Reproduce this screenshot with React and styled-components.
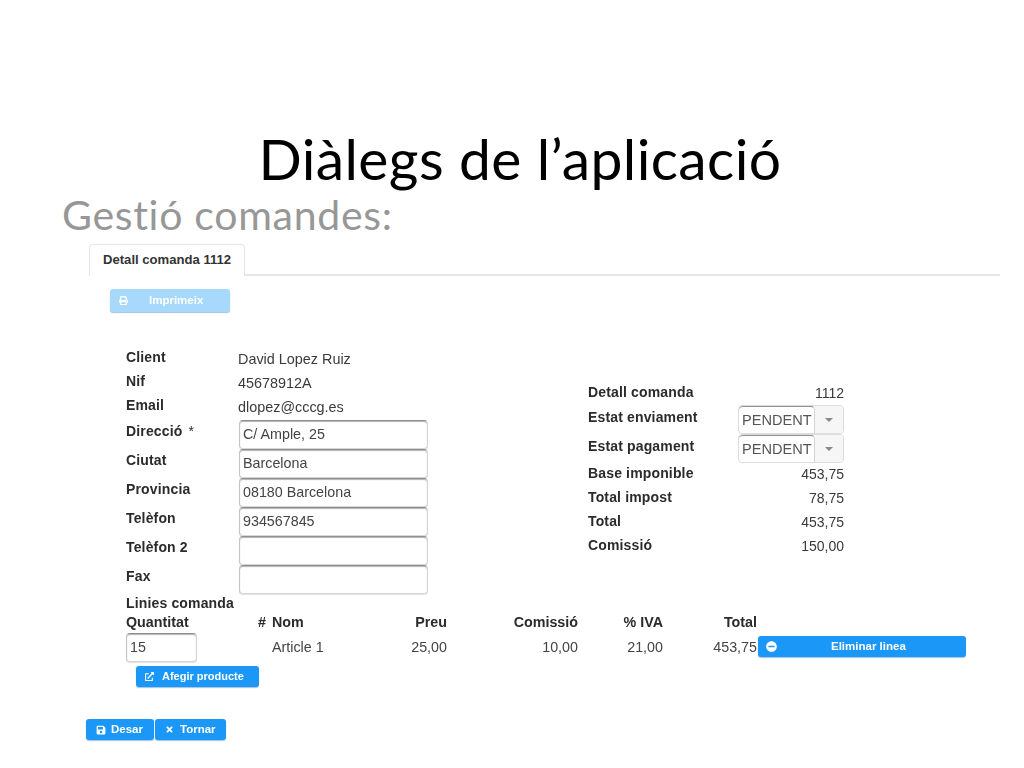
import React from "react";
import styled, { createGlobalStyle } from "styled-components";
import { FaPrint, FaExternalLinkAlt, FaSave, FaTimes, FaMinusCircle } from "react-icons/fa";

const Global = createGlobalStyle`
  html, body { margin: 0; padding: 0; background: #fff; }
  * { box-sizing: border-box; }
`;

const Slide = styled.div`
  width: 1024px;
  height: 768px;
  overflow: hidden;
  background: #fff;
  font-family: "Liberation Sans", Arial, sans-serif;
  font-size: 14px;
  color: #333;
`;
const Title = styled.h1`
  margin: 0;
  padding: 123px 0 0 16px;
  height: 193px;
  text-align: center;
  font: 400 57px/70px Lato, sans-serif;
  font-variant-ligatures: none;
  letter-spacing: 0.4px;
  color: #000;
`;
const Subtitle = styled.h2`
  margin: 0;
  padding-left: 62px;
  height: 51px;
  font: 400 41px/44px Lato, sans-serif;
  font-variant-ligatures: none;
  letter-spacing: 0.7px;
  color: #979797;
`;
const Form = styled.div`
  filter: blur(0.35px);
`;
const TabBar = styled.div`
  margin-left: 89px;
  width: 911px;
  height: 32px;
  display: flex;
  border-bottom: 2px solid #e6e6e6;
`;
const Tab = styled.div`
  width: 156px;
  height: 32px;
  padding-left: 13px;
  background: #fff;
  border: 1px solid #e6e6e6;
  border-bottom: none;
  border-radius: 4px 4px 0 0;
  font-weight: 700;
  font-size: 13.1px;
  line-height: 29px;
  color: #333;
`;
const Toolbar = styled.div`
  padding: 13px 0 0 110px;
  height: 70px;
`;
const Button = styled.div`
  display: flex;
  align-items: center;
  height: ${(p) => p.$h || 22}px;
  width: ${(p) => p.$w}px;
  padding-left: ${(p) => p.$pad || 9}px;
  gap: ${(p) => p.$gap || 6}px;
  background: ${(p) => (p.$faded ? "#a7d9fd" : "#1b98f7")};
  border-radius: 3px;
  box-shadow: 0 1px 1px rgba(0, 80, 160, 0.35);
  color: #fff;
  font-weight: 700;
  font-size: ${(p) => p.$fs || 11.5}px;
  line-height: 1;
  white-space: nowrap;
  svg { flex: none; }
`;
const Columns = styled.div`
  display: flex;
  padding-left: 126px;
  height: 248px;
`;
const LeftCol = styled.div`
  width: 462px;
`;
const RightCol = styled.div`
  width: 256px;
  padding-top: 35px;
`;
const InfoRow = styled.div`
  display: grid;
  grid-template-columns: 112px 1fr;
  height: 24px;
  &[data-gap] { margin-bottom: 2px; }
`;
const FieldRow = styled.div`
  display: grid;
  grid-template-columns: 113px 189px;
  height: 29px;
`;
const Label = styled.div`
  font-weight: 700;
  font-size: 14px;
  line-height: 22px;
  letter-spacing: 0.15px;
  padding-top: ${(p) => p.$top || 0}px;
  color: #2b2b2b;
  white-space: nowrap;
  span { font-weight: 400; margin-left: 6px; }
`;
const Value = styled.div`
  font-size: 14.4px;
  line-height: 26px;
  color: #3a3a3a;
`;
const TextInput = styled.input`
  display: block;
  width: ${(p) => p.$w || 189}px;
  height: 29px;
  padding: 0 3px 2px;
  border: 1px solid #d6d6d6;
  border-top-color: #8f8f8f;
  border-left-color: #c4c4c4;
  border-radius: 4px;
  box-shadow: inset 0 1px 1px rgba(0, 0, 0, 0.3), 0 1px 1px rgba(0, 0, 0, 0.12);
  background: #fff;
  font: 14.3px "Liberation Sans", Arial, sans-serif;
  color: #444;
  outline: none;
`;
const DetailRow = styled.div`
  display: grid;
  grid-template-columns: 150px 106px;
  height: ${(p) => p.$h || 24}px;
`;
const Amount = styled.div`
  text-align: right;
  font-size: 14px;
  line-height: 24px;
  color: #3a3a3a;
`;
const SelectBox = styled.div`
  display: flex;
  width: 106px;
  height: 29px;
  border: 1px solid #dcdcdc;
  border-radius: 4px;
  overflow: hidden;
`;
const SelectText = styled.div`
  width: 76px;
  padding-left: 3px;
  border-top: 1px solid #8e8e8e;
  border-right: 1px solid #d4d4d4;
  border-radius: 4px 4px 0 0;
  font-size: 14.6px;
  line-height: 26px;
  color: #555;
  white-space: nowrap;
`;
const SelectCaret = styled.div`
  flex: 1;
  display: flex;
  align-items: center;
  justify-content: center;
  background: #f6f6f6;
  &::after {
    content: "";
    border-left: 4px solid transparent;
    border-right: 4px solid transparent;
    border-top: 4px solid #888;
  }
`;
const Lines = styled.div`
  padding-left: 126px;
`;
const LinesTitle = styled.div`
  font-weight: 700;
  font-size: 14px;
  line-height: 18px;
  letter-spacing: 0.15px;
  color: #2b2b2b;
`;
const LineGrid = styled.div`
  display: grid;
  grid-template-columns: 130px 10px 124px 57px 131px 85px 94px 209px;
`;
const Head = styled.div`
  font-weight: 700;
  font-size: 14.3px;
  line-height: 20px;
  height: 21px;
  color: #2b2b2b;
  white-space: nowrap;
  text-align: ${(p) => (p.$right ? "right" : "left")};
  padding-left: ${(p) => p.$pad || 0}px;
`;
const Cell = styled.div`
  font-size: 14.3px;
  line-height: 29px;
  color: #444;
  text-align: ${(p) => (p.$right ? "right" : "left")};
  padding-left: ${(p) => p.$pad || 0}px;
`;
const ActionCell = styled.div`
  padding: 3px 0 0 1px;
`;
const AddRow = styled.div`
  padding: 4px 0 0 10px;
`;
const Footer = styled.div`
  display: flex;
  gap: 1px;
  padding: 32px 0 0 86px;
`;

const info = [
  ["Client", "David Lopez Ruiz"],
  ["Nif", "45678912A"],
  ["Email", "dlopez@cccg.es"],
];
const fields = [
  ["Direcció", "C/ Ample, 25", true],
  ["Ciutat", "Barcelona"],
  ["Provincia", "08180 Barcelona"],
  ["Telèfon", "934567845"],
  ["Telèfon 2", ""],
  ["Fax", ""],
];

export default function App() {
  return (
    <Slide>
      <Global />
      <Title>Diàlegs de l’aplicació</Title>
      <Subtitle>Gestió comandes:</Subtitle>
      <Form>
        <TabBar>
          <Tab>Detall comanda 1112</Tab>
        </TabBar>
        <Toolbar>
          <Button $w={120} $h={23} $faded $gap={21}>
            <FaPrint size={9} />
            Imprimeix
          </Button>
        </Toolbar>
        <Columns>
          <LeftCol>
            {info.map(([l, v], i) => (
              <InfoRow key={l} data-gap={i === 2 ? "" : undefined}>
                <Label>{l}</Label>
                <Value>{v}</Value>
              </InfoRow>
            ))}
            {fields.map(([l, v, req]) => (
              <FieldRow key={l}>
                <Label>
                  {l}
                  {req && <span>*</span>}
                </Label>
                <TextInput defaultValue={v} readOnly />
              </FieldRow>
            ))}
          </LeftCol>
          <RightCol>
            <DetailRow>
              <Label>Detall comanda</Label>
              <Amount>1112</Amount>
            </DetailRow>
            <DetailRow $h={29}>
              <Label $top={1}>Estat enviament</Label>
              <SelectBox>
                <SelectText>PENDENT</SelectText>
                <SelectCaret />
              </SelectBox>
            </DetailRow>
            <DetailRow $h={28}>
              <Label $top={1}>Estat pagament</Label>
              <SelectBox>
                <SelectText>PENDENT</SelectText>
                <SelectCaret />
              </SelectBox>
            </DetailRow>
            {[
              ["Base imponible", "453,75"],
              ["Total impost", "78,75"],
              ["Total", "453,75"],
              ["Comissió", "150,00"],
            ].map(([l, v]) => (
              <DetailRow key={l}>
                <Label>{l}</Label>
                <Amount>{v}</Amount>
              </DetailRow>
            ))}
          </RightCol>
        </Columns>
        <Lines>
          <LinesTitle>Linies comanda</LinesTitle>
          <LineGrid>
            <Head>Quantitat</Head>
            <Head $right>#</Head>
            <Head $pad={6}>Nom</Head>
            <Head $right>Preu</Head>
            <Head $right>Comissió</Head>
            <Head $right>% IVA</Head>
            <Head $right>Total</Head>
            <Head />
            <TextInput $w={71} defaultValue="15" readOnly />
            <Cell />
            <Cell $pad={6}>Article 1</Cell>
            <Cell $right>25,00</Cell>
            <Cell $right>10,00</Cell>
            <Cell $right>21,00</Cell>
            <Cell $right>453,75</Cell>
            <ActionCell>
              <Button $w={208} $h={21} $gap={54} $pad={8}>
                <FaMinusCircle size={11} />
                Eliminar linea
              </Button>
            </ActionCell>
          </LineGrid>
          <AddRow>
            <Button $w={123} $h={21} $gap={8} $fs={11}>
              <FaExternalLinkAlt size={9} />
              Afegir producte
            </Button>
          </AddRow>
        </Lines>
        <Footer>
          <Button $w={68} $h={21} $gap={5} $pad={10}>
            <FaSave size={10} />
            Desar
          </Button>
          <Button $w={71} $h={21} $gap={6} $pad={10}>
            <FaTimes size={9} />
            Tornar
          </Button>
        </Footer>
      </Form>
    </Slide>
  );
}
